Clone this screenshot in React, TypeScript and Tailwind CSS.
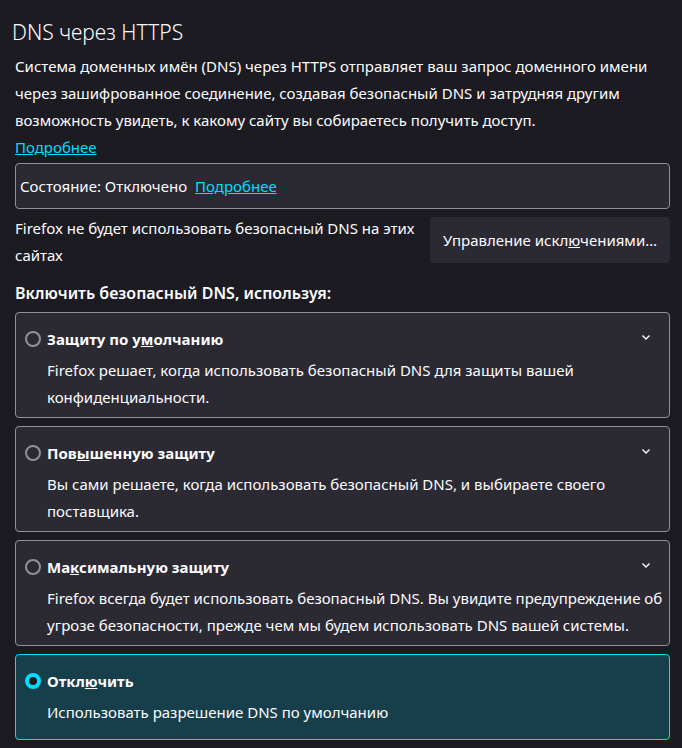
import React from "react";

const font = { fontFamily: '"Noto Sans", "Open Sans", sans-serif' };

function Chevron() {
  return (
    <svg width="12" height="12" viewBox="0 0 12 12" className="text-[#fbfbfe]">
      <path d="M2.5 4.5 L6 8 L9.5 4.5" fill="none" stroke="currentColor" strokeWidth="1.4" />
    </svg>
  );
}

function Radio({ checked }: { checked?: boolean }) {
  if (checked) {
    return <span className="block w-4 h-4 rounded-full border-[4px] border-[#00ddff] bg-[#1c1b22] shrink-0" />;
  }
  return <span className="block w-4 h-4 rounded-full border-2 border-[#8f8f9d] bg-[#2b2a33] shrink-0" />;
}

function Option({
  label,
  lines,
  checked,
  chevron = true,
}: {
  label: React.ReactNode;
  lines: string[];
  checked?: boolean;
  chevron?: boolean;
}) {
  return (
    <div
      className={`rounded-[4px] border pl-[9px] pr-4 pt-[13px] ${
        checked ? "border-[#00ddff] bg-[#173f4b] pb-[13px]" : "border-[#8f8f9d] bg-[#2b2a33] pb-[6px]"
      }`}
    >
      <div className="flex items-center h-[26px]">
        <Radio checked={checked} />
        <span className="ml-[6px] font-bold text-[15px] text-[#fbfbfe] flex-1">{label}</span>
        {chevron && (
          <span className="relative -top-[2px] mr-[1px]">
            <Chevron />
          </span>
        )}
      </div>
      <div className="pl-[22px] mt-[5px] text-[15px] leading-[27px] text-[#fbfbfe]">
        {lines.map((l, i) => (
          <div key={i} className="whitespace-nowrap">{l}</div>
        ))}
      </div>
    </div>
  );
}

export default function App() {
  return (
    <div className="w-[682px] h-[748px] bg-[#1c1b22] text-[#fbfbfe] overflow-hidden" style={font}>
      <div className="pl-[15px] pr-[12px]">
        <h1 className="-ml-[3px] pt-[17px] text-[21px] font-light leading-[30px]">DNS через HTTPS</h1>
        <div className="mt-[6px] text-[15px] leading-[27px]">
          <div className="whitespace-nowrap">Система доменных имён (DNS) через HTTPS отправляет ваш запрос доменного имени</div>
          <div className="whitespace-nowrap">через зашифрованное соединение, создавая безопасный DNS и затрудняя другим</div>
          <div className="whitespace-nowrap">возможность увидеть, к какому сайту вы собираетесь получить доступ.</div>
          <div>
            <a className="text-[#00ddff] underline">Подробнее</a>
          </div>
        </div>

        <div className="mt-[2px] rounded-[4px] border border-[#8f8f9d] bg-[#2b2a33] h-[46px] flex items-center px-[4px] text-[15px]">
          <span>Состояние: Отключено</span>
          <a className="ml-[8px] text-[#00ddff] underline">Подробнее</a>
        </div>

        <div className="mt-[8px] flex items-start justify-between">
          <div className="-mt-[2px] text-[15px] leading-[27px] w-[400px]">
            <div className="whitespace-nowrap">Firefox не будет использовать безопасный DNS на этих</div>
            <div>сайтах</div>
          </div>
          <button className="w-[240px] h-[46px] rounded-[4px] bg-[#2b2a33] text-[15px] text-[#fbfbfe]">
            Управление искл<u>ю</u>чениями…
          </button>
        </div>

        <div className="mt-[11px] text-[16px] font-semibold leading-[26px]">Включить безопасный DNS, используя:</div>

        <div className="mt-[6px] flex flex-col gap-[8px]">
          <Option
            label={<>Защиту по у<u>м</u>олчанию</>}
            lines={[
              "Firefox решает, когда использовать безопасный DNS для защиты вашей",
              "конфиденциальности.",
            ]}
          />
          <Option
            label={<>Пов<u>ы</u>шенную защиту</>}
            lines={[
              "Вы сами решаете, когда использовать безопасный DNS, и выбираете своего",
              "поставщика.",
            ]}
          />
          <Option
            label={<>Ма<u>к</u>симальную защиту</>}
            lines={[
              "Firefox всегда будет использовать безопасный DNS. Вы увидите предупреждение об",
              "угрозе безопасности, прежде чем мы будем использовать DNS вашей системы.",
            ]}
          />
          <Option
            checked
            chevron={false}
            label={<>Откл<u>ю</u>чить</>}
            lines={["Использовать разрешение DNS по умолчанию"]}
          />
        </div>
      </div>
    </div>
  );
}
